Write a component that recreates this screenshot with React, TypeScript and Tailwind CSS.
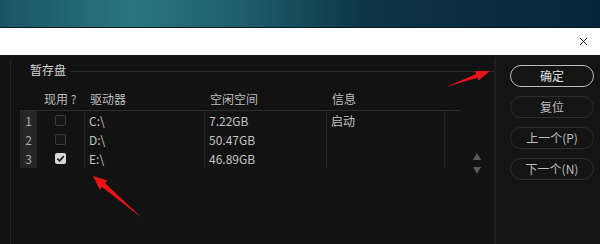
import { X } from "lucide-react";

const rows = [
  { n: "1", on: false, drive: "C:\\", free: "7.22GB", info: "启动" },
  { n: "2", on: false, drive: "D:\\", free: "50.47GB", info: "" },
  { n: "3", on: true, drive: "E:\\", free: "46.89GB", info: "" },
];

function Check({ on }: { on: boolean }) {
  if (on) {
    return (
      <span className="flex h-[11px] w-[11px] items-center justify-center rounded-[2px] bg-[#d8d8d8]">
        <svg viewBox="0 0 10 10" className="h-[9px] w-[9px]">
          <path d="M1.5 5.2 L4 7.6 L8.6 2.4" fill="none" stroke="#1a1a1a" strokeWidth="1.8" />
        </svg>
      </span>
    );
  }
  return <span className="h-[11px] w-[11px] rounded-[2px] border border-[#3a3a3a] bg-[#161616]" />;
}

export default function App() {
  return (
    <div
      className="relative h-[244px] w-[600px] overflow-hidden bg-[#121212] text-[12px] text-[#c4c4c4]"
      style={{ fontFamily: '"Noto Sans CJK SC", "Noto Sans", sans-serif' }}
    >
      <div className="h-[28px] border-b border-[#051820] bg-[linear-gradient(90deg,#1b5563_0%,#2a7582_22%,#1f5e6c_40%,#0c3444_62%,#07263a_100%)]" />
      <div className="flex h-[27px] items-center justify-end bg-white pr-[10px]">
        <X className="h-[13px] w-[13px] text-black" strokeWidth={1.6} />
      </div>

      <div className="flex h-[189px]">
        <div className="flex w-[495px] pl-[10px] pt-[5px]">
          <div className="flex flex-1 flex-col border-l border-r border-[#232323]">
            <div className="flex items-center pl-[19px]">
              <span className="leading-[20px] text-[#d4d4d4]">暂存盘</span>
              <div className="ml-[4px] mt-[2px] h-px flex-1 bg-[#2a2a2a]" />
            </div>

            <div className="flex pl-[9px] pt-[7px]">
              <div className="w-[440px]">
                <div className="flex h-[24px] items-center border-b border-[#2c2c2c] text-[#bdbdbd]">
                  <span className="w-[17px]" />
                  <span className="w-[47px] pl-[7px]">现用 ?</span>
                  <span className="w-[120px] pl-[6px]">驱动器</span>
                  <span className="w-[122px] pl-[6px]">空闲空间</span>
                  <span className="pl-[6px]">信息</span>
                </div>
                {rows.map((r) => (
                  <div key={r.n} className="flex h-[19px] items-center">
                    <span className="flex h-full w-[17px] items-center justify-center bg-[#262626] text-[#aaaaaa]">{r.n}</span>
                    <span className="flex h-full w-[47px] items-center justify-center">
                      <Check on={r.on} />
                    </span>
                    <span className="flex h-full w-[120px] items-center border-l border-[#222222] pl-[4px]">{r.drive}</span>
                    <span className="flex h-full w-[122px] items-center border-l border-[#222222] pl-[4px]">{r.free}</span>
                    <span className="flex h-full w-[119px] items-center border-l border-r border-[#222222] pl-[4px]">{r.info}</span>
                  </div>
                ))}
              </div>
              <div className="flex flex-1 flex-col items-center pt-[65px]">
                <svg viewBox="0 0 10 24" className="h-[24px] w-[10px]">
                  <path d="M5 1 L9 8 L1 8 Z" fill="#5a5a5a" />
                  <path d="M1 15 L9 15 L5 22 Z" fill="#5a5a5a" />
                </svg>
              </div>
            </div>
          </div>
        </div>

        <div className="flex flex-1 flex-col gap-[9px] border-l border-[#1e1e1e] bg-[#141414] pl-[14px] pr-[6px] pt-[10px]">
          <button className="h-[22px] rounded-full border border-[#bdbdbd] text-[12px] text-[#e0e0e0]">确定</button>
          <button className="h-[22px] rounded-full border border-[#2e2e2e] text-[12px] text-[#bdbdbd]">复位</button>
          <button className="h-[22px] rounded-full border border-[#2e2e2e] text-[12px] text-[#bdbdbd]">上一个(P)</button>
          <button className="h-[22px] rounded-full border border-[#2e2e2e] text-[12px] text-[#bdbdbd]">下一个(N)</button>
        </div>
      </div>

      <svg className="pointer-events-none absolute left-0 top-0 h-[244px] w-[600px]" viewBox="0 0 600 244">
        <polygon points="446,87 477.5,77.7 478.5,80.5 490,71 475.1,71.1 476.1,73.9" fill="#e8141a" />
        <polygon points="142,218 102,187 99.7,189.7 93,176 107.5,180.5 105.2,183.2" fill="#e8141a" />
      </svg>
    </div>
  );
}
